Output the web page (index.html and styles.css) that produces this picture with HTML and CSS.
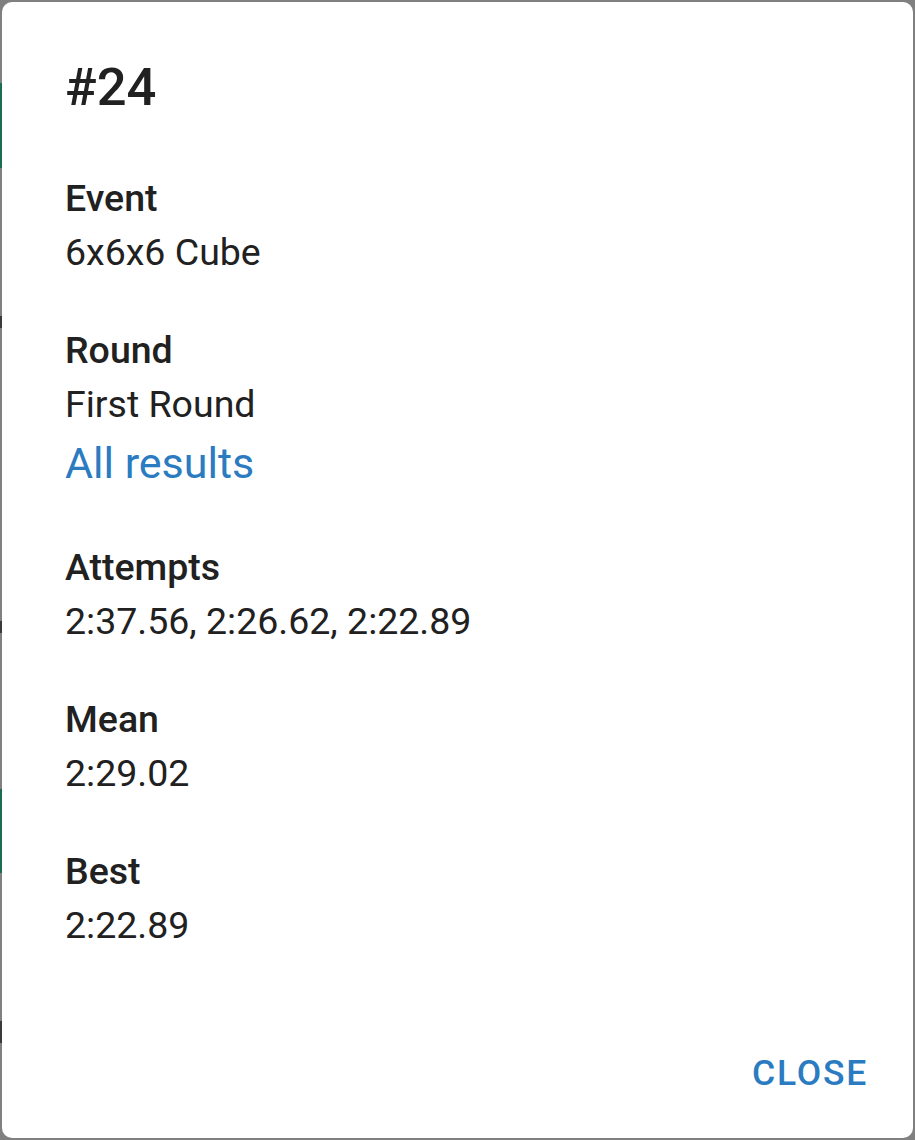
FILE: index.html
```html
<!DOCTYPE html>
<html lang="en">
<head>
<meta charset="utf-8">
<title>#24</title>
<link rel="stylesheet" href="styles.css">
</head>
<body>
<div class="page">
  <div class="edge">
    <div class="bar bar-1"></div>
    <div class="mark mark-1"></div>
    <div class="mark mark-2"></div>
    <div class="bar bar-2"></div>
    <div class="mark mark-3"></div>
  </div>
</div>
<div class="dialog" role="dialog">
  <h2 class="title">#24</h2>
  <div class="content">
    <div class="field">
      <div class="label">Event</div>
      <div class="value">6x6x6 Cube</div>
    </div>
    <div class="field">
      <div class="label">Round</div>
      <div class="value">First Round</div>
      <a class="link" href="#">All results</a>
    </div>
    <div class="field">
      <div class="label">Attempts</div>
      <div class="value">2:37.56, 2:26.62, 2:22.89</div>
    </div>
    <div class="field">
      <div class="label">Mean</div>
      <div class="value">2:29.02</div>
    </div>
    <div class="field">
      <div class="label">Best</div>
      <div class="value">2:22.89</div>
    </div>
  </div>
  <div class="actions">
    <button class="btn" type="button">Close</button>
  </div>
</div>
</body>
</html>
```

FILE: styles.css
```css
html, body {
  margin: 0;
  padding: 0;
  height: 100%;
}
body {
  background: #808080;
  font-family: Roboto, "Noto Sans", sans-serif;
  color: #212121;
  overflow: hidden;
}
.page {
  height: 100%;
}
.edge {
  width: 3px;
  display: flex;
  flex-direction: column;
}
.bar {
  background: #1c6c50;
  width: 3px;
}
.bar-1 { margin-top: 83px; height: 85px; }
.mark { background: #3a3a3a; width: 2px; height: 12px; }
.mark-1 { margin-top: 148px; }
.mark-2 { margin-top: 293px; }
.bar-2 { margin-top: 156px; height: 84px; }
.mark-3 { margin-top: 148px; height: 22px; }

.dialog {
  position: fixed;
  top: 2px;
  left: 2px;
  right: 2px;
  bottom: 2px;
  background: #ffffff;
  border-radius: 10px;
  display: flex;
  flex-direction: column;
  box-sizing: border-box;
  padding-top: 53px;
}
.title {
  margin: 0;
  padding: 0 63px;
  font-size: 52.5px;
  font-weight: 500;
  line-height: 64px;
  color: #212121;
}
.content {
  padding: 52px 63px 0;
  display: flex;
  flex-direction: column;
  gap: 44px;
}
.field {
  display: flex;
  flex-direction: column;
  font-size: 37.5px;
  line-height: 54px;
}
.label {
  font-weight: 500;
}
.value {
  font-weight: 400;
}
.link {
  font-size: 43px;
  line-height: 65px;
  color: #2b7bc1;
  text-decoration: none;
}
.actions {
  margin-top: auto;
  display: flex;
  justify-content: flex-end;
  padding: 0 25px 18px;
}
.btn {
  font-family: Roboto, "Noto Sans", sans-serif;
  font-size: 35.5px;
  font-weight: 500;
  letter-spacing: 1.75px;
  text-transform: uppercase;
  color: #2b7bc1;
  background: none;
  border: 0;
  padding: 0 20px;
  line-height: 94px;
  height: 94px;
}
```
